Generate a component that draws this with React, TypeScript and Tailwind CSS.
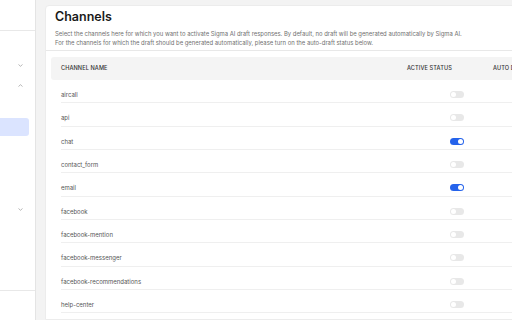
import React from "react";

const channels = [
  { name: "aircall", active: false },
  { name: "api", active: false },
  { name: "chat", active: true },
  { name: "contact_form", active: false },
  { name: "email", active: true },
  { name: "facebook", active: false },
  { name: "facebook-mention", active: false },
  { name: "facebook-messenger", active: false },
  { name: "facebook-recommendations", active: false },
  { name: "help-center", active: false },
];

function Chevron({ up = false }: { up?: boolean }) {
  return (
    <svg width="5" height="3" viewBox="0 0 5 3" className="text-[#9a9a9a]">
      <path
        d={up ? "M0.5 2.5 L2.5 0.7 L4.5 2.5" : "M0.5 0.5 L2.5 2.3 L4.5 0.5"}
        fill="none"
        stroke="currentColor"
        strokeWidth="0.7"
      />
    </svg>
  );
}

function Toggle({ on }: { on: boolean }) {
  return (
    <div
      className={`w-[14px] h-[7px] rounded-full p-[1px] flex ${
        on ? "bg-[#2563eb] justify-end" : "bg-[#e8e8e8] justify-start"
      }`}
    >
      <div className="w-[5px] h-[5px] rounded-full bg-white" />
    </div>
  );
}

export default function App() {
  return (
    <div
      className="w-[512px] h-[320px] overflow-hidden flex bg-[#f3f3f3]"
      style={{ fontFamily: "Inter, 'Liberation Sans', sans-serif" }}
    >
      {/* Sidebar */}
      <aside className="w-[36px] shrink-0 h-full bg-white border-r border-[#e4e4e4] flex flex-col">
        <div className="h-[31px] border-b border-[#e8e8e8]" />
        <nav className="flex-1 flex flex-col pt-[24px]">
          <div className="h-[20px] flex items-center justify-end pr-[12px]">
            <Chevron />
          </div>
          <div className="h-[20px] flex items-center justify-end pr-[12px]">
            <Chevron up />
          </div>
          <div className="h-[23px]" />
          <div className="h-[18px] mr-[6px] rounded-r-[3px] bg-[#dbe4ff]" />
          <div className="h-[63px]" />
          <div className="h-[20px] flex items-center justify-end pr-[12px]">
            <Chevron />
          </div>
        </nav>
        <div className="h-[30px] border-t border-[#e8e8e8]" />
      </aside>

      {/* Main */}
      <main className="flex-1 pl-[9px] pt-[5px] min-w-0">
        <div className="w-[520px] h-full bg-white border border-[#ececec] rounded-tl-[4px]">
          <div className="px-[9px] pt-[2px] pb-[3px] border-b border-[#e8e8e8]">
            <h1 className="text-[12.5px] leading-[18px] font-semibold text-[#1a1a1a]">
              Channels
            </h1>
            <p className="mt-[3px] text-[5.9px] leading-[9px] text-[#707070] whitespace-nowrap">
              Select the channels here for which you want to activate Sigma AI draft responses. By default, no draft will be generated automatically by Sigma AI.
            </p>
            <p className="text-[5.9px] leading-[9px] text-[#707070] whitespace-nowrap">
              For the channels for which the draft should be generated automatically, please turn on the auto-draft status below.
            </p>
          </div>

          <div className="px-[5px] pt-[6px]">
            <div className="h-[23px] rounded-[3px] bg-[#f4f4f4] px-[10px] flex items-center text-[5.6px] font-medium text-[#333] tracking-[0.1px]">
              <div className="w-[346px]">CHANNEL NAME</div>
              <div className="w-[86px]">ACTIVE STATUS</div>
              <div className="whitespace-nowrap">AUTO DRAFT</div>
            </div>

            <div className="mx-[10px]">
              {channels.map((c) => (
                <div
                  key={c.name}
                  className="h-[23.33px] pt-[7px] border-b border-[#efefef] flex items-center text-[6px] text-[#555]"
                >
                  <div className="w-[346px]">{c.name}</div>
                  <div className="w-[86px] pl-[43px]">
                    <Toggle on={c.active} />
                  </div>
                </div>
              ))}
            </div>
          </div>
        </div>
      </main>
    </div>
  );
}
